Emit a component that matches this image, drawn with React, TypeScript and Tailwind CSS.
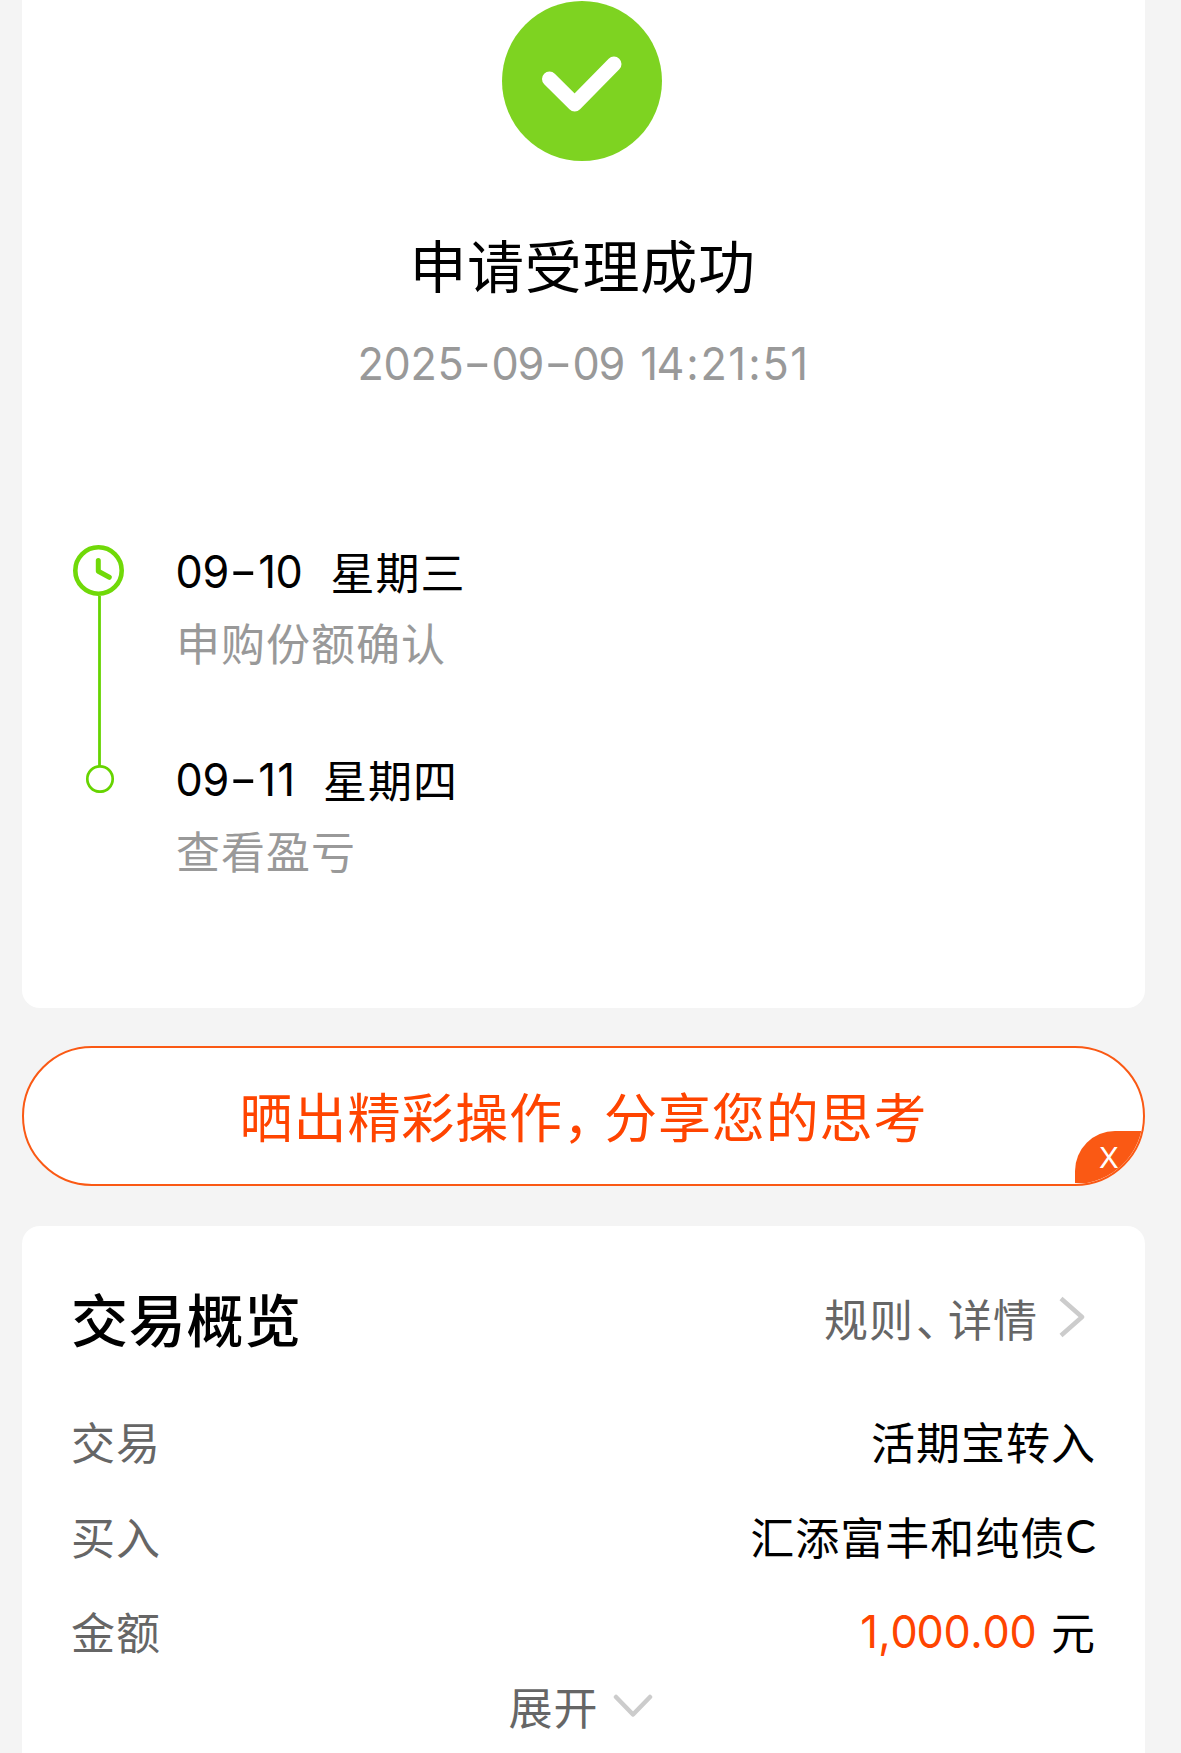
import React from "react";

const CELL: Record<string, string> = {
  "-": "w-[28px]",
  ":": "w-[16px]",
  "1": "w-[19px]",
  "4": "w-[27px]",
  " ": "w-[13px]",
  ",": "w-[13px]",
  ".": "w-[13px]",
};

const SHIFT: Record<string, string> = {
  "-": "scale-x-[1.38] -translate-y-[1px]",
  "1": "translate-x-[1px] scale-x-[0.97]",
  "4": "scale-x-[0.96]",
};

function Numerals({ text }: { text: string }) {
  return (
    <span className="inline-flex translate-y-[1px] whitespace-pre font-['Inter'] text-[45px] tracking-normal">
      {text.split("").map((ch, i) => (
        <span key={i} className={`inline-flex justify-center ${CELL[ch] ?? "w-[26.5px]"}`}>
          <span className={SHIFT[ch] ?? "scale-x-[0.96]"}>{ch}</span>
        </span>
      ))}
    </span>
  );
}

function Step({ date, day, note }: { date: string; day: string; note: string }) {
  return (
    <div className="h-[208px]">
      <div className="flex h-[71px] items-center gap-[28px] text-black">
        <Numerals text={date} />
        <span>{day}</span>
      </div>
      <div className="flex h-[71px] items-center text-[#999]">{note}</div>
    </div>
  );
}

function Row({ label, children }: { label: string; children: React.ReactNode }) {
  return (
    <div className="flex h-[95px] items-center justify-between">
      <span className="text-[#666]">{label}</span>
      <span className="flex items-center text-black">{children}</span>
    </div>
  );
}

export default function App() {
  return (
    <div className="h-[1753px] overflow-hidden bg-[#f4f4f4] pl-[22px] pr-[36px] font-['Noto_Sans_CJK_SC',sans-serif] text-[44px] leading-none tracking-[1px]">
      <section className="flex h-[1008px] flex-col rounded-b-[18px] bg-white pt-[1px]">
        <svg className="ml-[480px] block shrink-0" width="160" height="160" viewBox="0 0 160 160">
          <circle cx="80" cy="80" r="80" fill="#7ed321" />
          <path d="M47.5 78 L72.7 103 L112 63" fill="none" stroke="#fff" strokeWidth="15" strokeLinecap="round" strokeLinejoin="round" />
        </svg>
        <h1 className="mt-[62px] flex h-[80px] items-center justify-center pr-[2px] text-[57px] tracking-[0.7px] text-black">
          申请受理成功
        </h1>
        <div className="mt-[29px] flex h-[60px] items-center justify-center pr-[2px] text-[#999]">
          <Numerals text="2025-09-09 14:21:51" />
        </div>
        <div className="mt-[143px] flex pl-[51px]">
          <svg className="mt-[10px] block shrink-0" width="51" height="248" viewBox="0 0 51 248">
            <circle cx="25.5" cy="25.5" r="23.2" fill="none" stroke="#70d908" strokeWidth="4.6" />
            <path d="M25.3 15.5 V26.3 L36.3 32.3" fill="none" stroke="#70d908" strokeWidth="5" strokeLinecap="round" strokeLinejoin="round" />
            <path d="M26.5 51 V221" stroke="#66d400" strokeWidth="2.8" />
            <circle cx="27" cy="234" r="12.7" fill="#fff" stroke="#66d400" strokeWidth="2.7" />
          </svg>
          <div className="ml-[52px]">
            <Step date="09-10" day="星期三" note="申购份额确认" />
            <Step date="09-11" day="星期四" note="查看盈亏" />
          </div>
        </div>
      </section>

      <section className="relative mt-[38px] flex h-[140px] items-center justify-center overflow-hidden rounded-[70px] border-2 border-[#fa5914] bg-white text-[53px] tracking-[0.9px] text-[#ff4400]">
        <span className="-translate-y-[1px]">晒出精彩操作</span>
        <span className="w-[41px] -translate-y-[1px] [font-feature-settings:'halt']">，</span>
        <span className="-translate-y-[1px]">分享您的思考</span>
        <button className="absolute bottom-[1px] right-0 flex h-[52px] w-[68px] items-center rounded-tl-[40px] bg-[#fa5914] pl-[24px] font-['Inter'] text-[29px] tracking-normal text-white">
          X
        </button>
      </section>

      <section className="mt-[40px] h-[527px] rounded-t-[18px] bg-white px-[49px] pt-[43px]">
        <div className="flex h-[97px] items-center justify-between">
          <h2 className="text-[57px] font-medium tracking-[0.7px] text-black">交易概览</h2>
          <div className="flex items-center pr-[11px] text-[#666]">
            <span>规则</span>
            <span className="w-[34px] pl-[2px] [font-feature-settings:'halt']">、</span>
            <span>详情</span>
            <svg className="-mt-[2px] ml-[21px] block" width="26" height="42" viewBox="0 0 26 42">
              <path d="M2 2.5 L23 21 L2 39.5" fill="none" stroke="#ccc" strokeWidth="4.5" strokeLinejoin="round" />
            </svg>
          </div>
        </div>
        <div className="pt-[27px]">
          <Row label="交易">活期宝转入</Row>
          <Row label="买入">
            汇添富丰和纯债<span className="font-['Lato'] text-[46px] tracking-normal">C</span>
          </Row>
          <Row label="金额">
            <span className="mr-[15px] inline-flex text-[#ff4400]">
              <Numerals text="1,000.00" />
            </span>
            元
          </Row>
        </div>
        <div className="flex h-[56px] items-center justify-center pr-[6px] text-[#666]">
          <span>展开</span>
          <svg className="ml-[14px] mt-[1px] block" width="40" height="25" viewBox="0 0 40 25">
            <path d="M3 3 L20 20.5 L37 3" fill="none" stroke="#ccc" strokeWidth="4.5" strokeLinecap="round" strokeLinejoin="round" />
          </svg>
        </div>
      </section>
    </div>
  );
}
